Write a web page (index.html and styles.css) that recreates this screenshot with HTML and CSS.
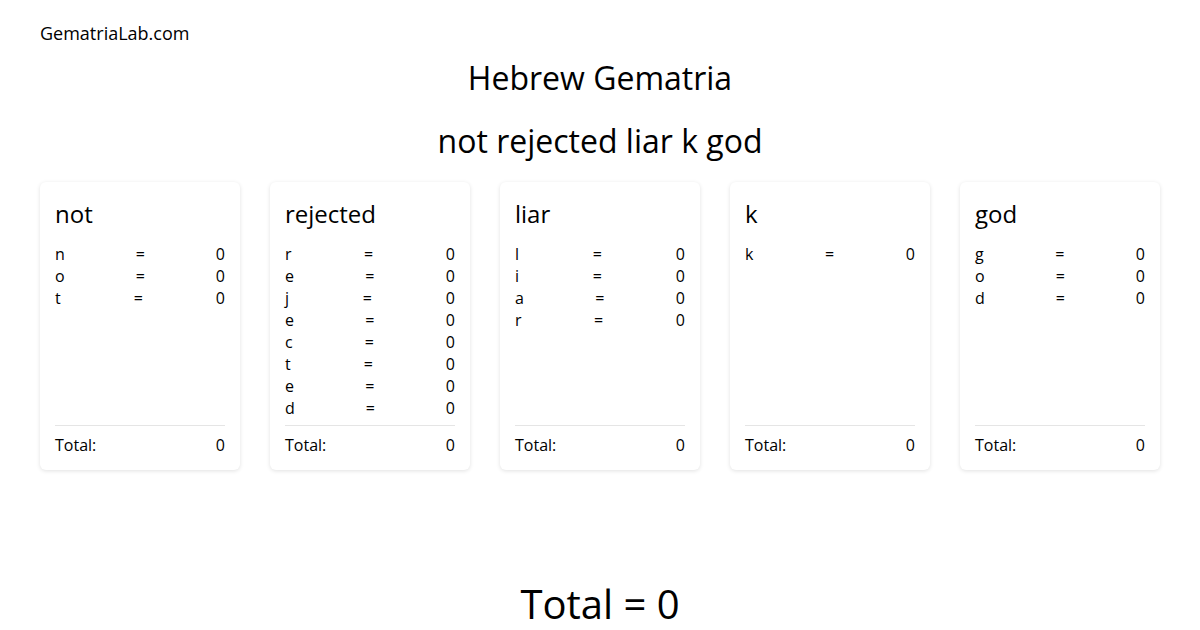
FILE: index.html
```html
<!DOCTYPE html>
<html>
<head>
<meta charset="utf-8">
<link rel="stylesheet" href="styles.css">
</head>
<body>
<div class="site">GematriaLab.com</div>
<h1 class="title">Hebrew Gematria</h1>
<h2 class="phrase">not rejected liar k god</h2>
<div class="cards">
  <div class="card">
    <div class="word">not</div>
    <div class="rows">
      <div class="row"><span>n</span><span>=</span><span>0</span></div>
      <div class="row"><span>o</span><span>=</span><span>0</span></div>
      <div class="row"><span>t</span><span>=</span><span>0</span></div>
    </div>
    <div class="total"><span>Total:</span><span>0</span></div>
  </div>
  <div class="card">
    <div class="word">rejected</div>
    <div class="rows">
      <div class="row"><span>r</span><span>=</span><span>0</span></div>
      <div class="row"><span>e</span><span>=</span><span>0</span></div>
      <div class="row"><span>j</span><span>=</span><span>0</span></div>
      <div class="row"><span>e</span><span>=</span><span>0</span></div>
      <div class="row"><span>c</span><span>=</span><span>0</span></div>
      <div class="row"><span>t</span><span>=</span><span>0</span></div>
      <div class="row"><span>e</span><span>=</span><span>0</span></div>
      <div class="row"><span>d</span><span>=</span><span>0</span></div>
    </div>
    <div class="total"><span>Total:</span><span>0</span></div>
  </div>
  <div class="card">
    <div class="word">liar</div>
    <div class="rows">
      <div class="row"><span>l</span><span>=</span><span>0</span></div>
      <div class="row"><span>i</span><span>=</span><span>0</span></div>
      <div class="row"><span>a</span><span>=</span><span>0</span></div>
      <div class="row"><span>r</span><span>=</span><span>0</span></div>
    </div>
    <div class="total"><span>Total:</span><span>0</span></div>
  </div>
  <div class="card">
    <div class="word">k</div>
    <div class="rows">
      <div class="row"><span>k</span><span>=</span><span>0</span></div>
    </div>
    <div class="total"><span>Total:</span><span>0</span></div>
  </div>
  <div class="card">
    <div class="word">god</div>
    <div class="rows">
      <div class="row"><span>g</span><span>=</span><span>0</span></div>
      <div class="row"><span>o</span><span>=</span><span>0</span></div>
      <div class="row"><span>d</span><span>=</span><span>0</span></div>
    </div>
    <div class="total"><span>Total:</span><span>0</span></div>
  </div>
</div>
<div class="grand">Total = 0</div>
</body>
</html>
```
FILE: styles.css
```css
html, body {
  margin: 0;
  padding: 0;
  background: #fff;
}
body {
  font-family: "Open Sans", "Noto Sans", sans-serif;
  color: #000;
  width: 1200px;
  height: 630px;
  overflow: hidden;
  padding: 0 40px;
  box-sizing: border-box;
}
.site {
  font-size: 18px;
  line-height: 24px;
  padding-top: 21px;
}
.title {
  margin: 0;
  text-align: center;
  font-weight: 400;
  font-size: 32px;
  line-height: 40px;
  margin-top: 13px;
}
.phrase {
  margin: 0;
  text-align: center;
  font-weight: 400;
  font-size: 32px;
  line-height: 44px;
  margin-top: 21px;
}
.cards {
  display: flex;
  gap: 30px;
  margin-top: 19px;
}
.card {
  width: 200px;
  box-sizing: border-box;
  padding: 16px 15px 14px;
  border-radius: 6px;
  box-shadow: 0 1px 4px rgba(0,0,0,0.12);
  display: flex;
  flex-direction: column;
  font-size: 16px;
  line-height: 22px;
}
.word {
  font-size: 24px;
  line-height: 32px;
  margin-bottom: 13px;
}
.rows {
  flex: 1;
  padding-bottom: 6px;
}
.row, .total {
  display: flex;
  justify-content: space-between;
}
.total {
  border-top: 1px solid #e5e5e5;
  padding-top: 8px;
}
.grand {
  text-align: center;
  font-size: 40px;
  line-height: 54px;
  margin-top: 107px;
}
```
